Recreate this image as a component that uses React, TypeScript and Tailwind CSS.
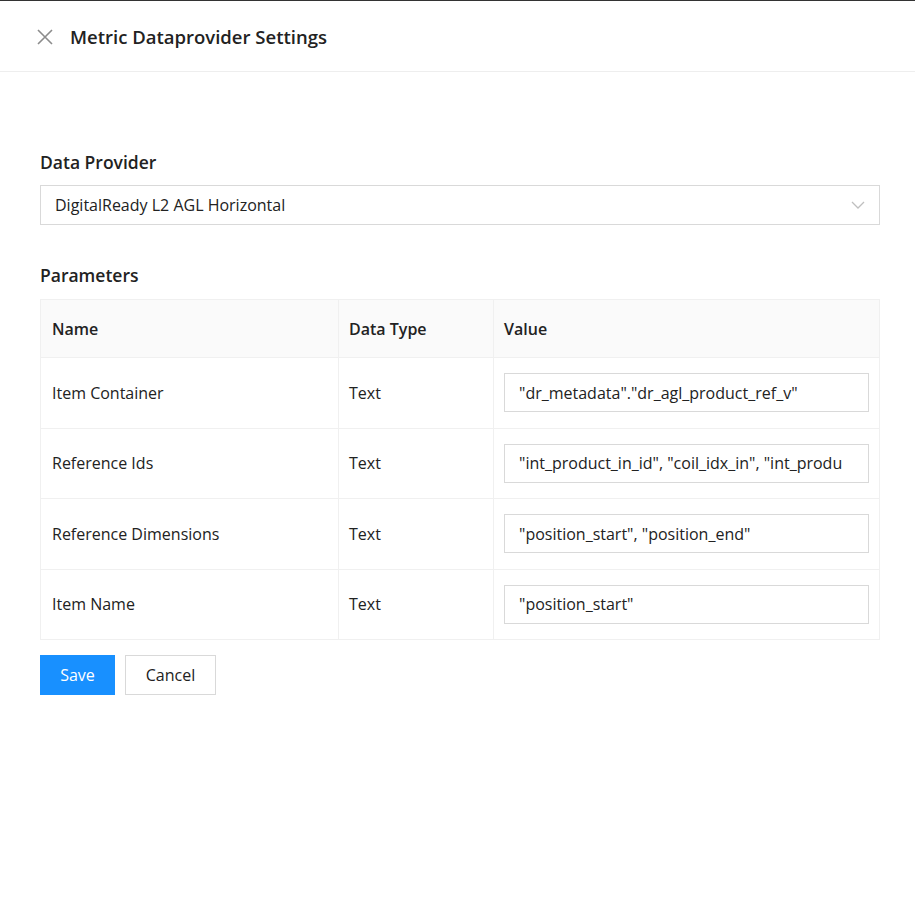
import React from "react";

const rows = [
  ["Item Container", '"dr_metadata"."dr_agl_product_ref_v"'],
  ["Reference Ids", '"int_product_in_id", "coil_idx_in", "int_produ'],
  ["Reference Dimensions", '"position_start", "position_end"'],
  ["Item Name", '"position_start"'],
];

export default function App() {
  return (
    <div className="w-[915px] h-[908px] bg-white text-[#222] text-[16px] border-t border-[#333]" style={{ fontFamily: '"Open Sans", sans-serif' }}>
      <div className="h-[71px] border-b border-[#eeeeee] flex items-center pl-[36px] gap-[16px] pt-[2px]">
        <svg width="18" height="18" viewBox="0 0 18 18" stroke="#8c8c8c" strokeWidth="1.6"><path d="M2 2L16 16M16 2L2 16" /></svg>
        <span className="text-[18.5px] font-semibold text-[#222]">Metric Dataprovider Settings</span>
      </div>
      <div className="pl-[40px] pr-[35px] pt-[78px]">
        <div className="text-[17.5px] font-semibold mb-[11px] leading-[24px]">Data Provider</div>
        <div className="h-[40px] border border-[#d9d9d9] flex items-center justify-between px-[14px]">
          <span>DigitalReady L2 AGL Horizontal</span>
          <svg width="14" height="10" viewBox="0 0 14 10" fill="none" stroke="#bfbfbf" strokeWidth="1.3"><path d="M1 2L7 8L13 2" /></svg>
        </div>
        <div className="text-[17.5px] font-semibold mt-[38px] mb-[12px] leading-[24px]">Parameters</div>
        <table className="w-full border-collapse table-fixed">
          <thead>
            <tr className="bg-[#fafafa] h-[58px] text-left">
              <th className="border border-[#f0f0f0] px-[11px] font-semibold w-[298px]">Name</th>
              <th className="border border-[#f0f0f0] px-[10px] font-semibold w-[155px]">Data Type</th>
              <th className="border border-[#f0f0f0] px-[10px] font-semibold">Value</th>
            </tr>
          </thead>
          <tbody>
            {rows.map(([n, v]) => (
              <tr key={n} className="h-[70.5px]">
                <td className="border border-[#f0f0f0] px-[11px]">{n}</td>
                <td className="border border-[#f0f0f0] px-[10px]">Text</td>
                <td className="border border-[#f0f0f0] px-[10px]">
                  <div className="h-[39px] border border-[#d9d9d9] flex items-center px-[14px] overflow-hidden whitespace-nowrap">{v}</div>
                </td>
              </tr>
            ))}
          </tbody>
        </table>
        <div className="flex gap-[10px] mt-[15px]">
          <button className="h-[40px] w-[75px] bg-[#1890ff] text-white">Save</button>
          <button className="h-[40px] w-[91px] border border-[#d9d9d9] bg-white">Cancel</button>
        </div>
      </div>
    </div>
  );
}
